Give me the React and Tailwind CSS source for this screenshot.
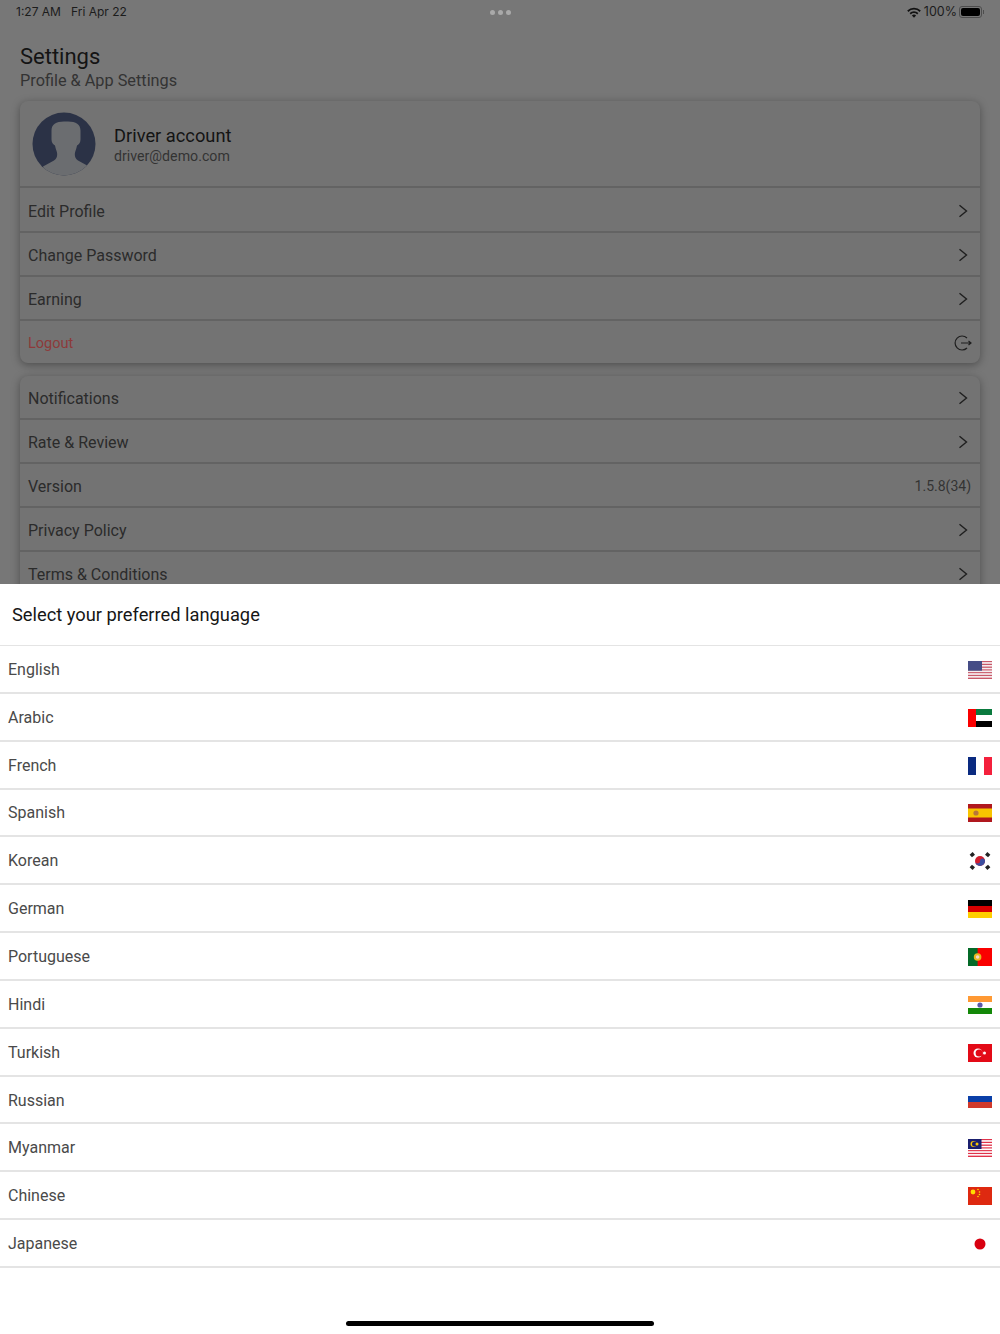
import React from "react";

const font = { fontFamily: 'Roboto, "Noto Sans", sans-serif' };

function Chevron() {
  return (
    <svg width="10" height="14" viewBox="0 0 10 14" fill="none" stroke="#1f1f1f" strokeWidth="1.4" className="mt-[2px]">
      <path d="M1.500 1.200 8.500 7 1.500 12.800" />
    </svg>
  );
}

function Row({ label, h, right, red, border = true }) {
  return (
    <div className={`flex shrink-0 items-center justify-between pl-[8px] pr-[12px] ${border ? "border-t-2 border-[#636363]" : ""} ${h}`}>
      <span className={`mt-[4px] leading-none ${red ? "text-[14.5px] text-[#8d3a3a]" : "text-[16px] text-[#2b2b2b]"}`}>{label}</span>
      {right ?? <Chevron />}
    </div>
  );
}

function StatusBar() {
  return (
    <div className="flex h-[24px] shrink-0 items-center justify-between pl-[16px] pr-[16px] text-[12px] text-[#1c1c1c]" style={{ fontFamily: 'Inter, sans-serif' }}>
      <div className="flex w-[200px] gap-[10px]">
        <span>1:27 AM</span>
        <span>Fri Apr 22</span>
      </div>
      <div className="flex gap-[3px]">
        <span className="size-[5px] rounded-full bg-[#a9a9a9]" />
        <span className="size-[5px] rounded-full bg-[#a9a9a9]" />
        <span className="size-[5px] rounded-full bg-[#a9a9a9]" />
      </div>
      <div className="flex w-[200px] items-center justify-end">
        <svg width="14" height="11" viewBox="0 0 14 11" className="mr-[3px]">
          <path d="M0.200 3.600a9.800 9.800 0 0 1 13.600 0l-1.200 1.300a8 8 0 0 0-11.200 0z" fill="#111" />
          <path d="M2.600 6.100a6.400 6.400 0 0 1 8.800 0l-1.200 1.300a4.600 4.600 0 0 0-6.400 0z" fill="#111" />
          <path d="M4.900 8.500a3 3 0 0 1 4.200 0L7 10.800z" fill="#111" />
        </svg>
        <span className="text-[12.5px]">100%</span>
        <div className="ml-[2px] flex items-center">
          <div className="flex h-[12px] w-[23px] items-center rounded-[3px] border border-[#4d4d4d] p-[1px]">
            <div className="h-full w-full rounded-[2px] bg-black" />
          </div>
          <div className="ml-[1px] h-[4px] w-[1px] bg-[#4d4d4d]" />
        </div>
      </div>
    </div>
  );
}

function Avatar() {
  return (
    <svg width="64" height="64" viewBox="0 0 64 64" className="shrink-0">
      <defs>
        <clipPath id="av"><circle cx="32" cy="32" r="31.500" /></clipPath>
      </defs>
      <circle cx="32" cy="32" r="31.500" fill="#2b3246" />
      <path clipPath="url(#av)" fill="#6b6d70" d="M32 9.500c-8 0-12.500 3-12.500 9v9c0 3 1.500 5 3.500 6 .5 3 1.500 5 2 7 .5 3 0 6-3 8l-11 6 5 15h36l5-15-11-6c-3-2-3.500-5-3-8 .5-2 1.500-4 2-7 2-1 3.500-3 3.500-6v-9c0-6-4.500-9-12.500-9z" />
    </svg>
  );
}

function Flag({ children, className = "h-[18px]", viewBox = "0 0 24 18" }) {
  return (
    <svg viewBox={viewBox} className={`w-[24px] ${className}`} preserveAspectRatio="none">
      {children}
    </svg>
  );
}

const stripes = (n, a, b) =>
  Array.from({ length: n }, (_, i) => (
    <rect key={i} x="0" y={(18 / n) * i} width="24" height={18 / n} fill={i % 2 ? b : a} />
  ));

const flags = {
  English: (
    <Flag>
      {stripes(13, "#c9596a", "#f4eef0")}
      <rect width="14" height="9.700" fill="#454d86" />
    </Flag>
  ),
  Arabic: (
    <Flag>
      <rect width="24" height="6" fill="#0a7a3e" />
      <rect y="6" width="24" height="6" fill="#fff" />
      <rect y="12" width="24" height="6" fill="#000" />
      <rect width="8" height="18" fill="#fa0000" />
    </Flag>
  ),
  French: (
    <Flag>
      <rect width="8" height="18" fill="#0a2a80" />
      <rect x="8" width="8" height="18" fill="#fff" />
      <rect x="16" width="8" height="18" fill="#f4203c" />
    </Flag>
  ),
  Spanish: (
    <Flag>
      <rect width="24" height="18" fill="#b0181e" />
      <rect y="4.500" width="24" height="9" fill="#f8c400" />
      <circle cx="8" cy="9" r="2.600" fill="#b8763a" />
    </Flag>
  ),
  Korean: (
    <Flag>
      <circle cx="12" cy="9" r="5" fill="#d01c2c" />
      <path d="M7 9a5 5 0 0 0 10 0 2.500 2.500 0 0 0-5 0 2.500 2.500 0 0 1-5 0z" fill="#3a4ea0" />
      <g stroke="#222" strokeWidth="3.600">
        <path d="M2.800 4 5.800 1.400" />
        <path d="M18.200 1.400 21.200 4" />
        <path d="M2.800 14 5.800 16.600" />
        <path d="M18.200 16.600 21.200 14" />
      </g>
    </Flag>
  ),
  German: (
    <Flag>
      <rect width="24" height="6" fill="#000" />
      <rect y="6" width="24" height="6" fill="#d80000" />
      <rect y="12" width="24" height="6" fill="#ffce00" />
    </Flag>
  ),
  Portuguese: (
    <Flag>
      <rect width="24" height="18" fill="#fa0000" />
      <rect width="9.600" height="18" fill="#046a28" />
      <circle cx="9.600" cy="9" r="3.800" fill="#e8b820" />
      <circle cx="9.600" cy="9" r="1.800" fill="#f0d8d0" />
    </Flag>
  ),
  Hindi: (
    <Flag>
      <rect width="24" height="6" fill="#ff9933" />
      <rect y="6" width="24" height="6" fill="#fff" />
      <rect y="12" width="24" height="6" fill="#138808" />
      <circle cx="12" cy="9" r="2.600" fill="#5a5aa8" />
    </Flag>
  ),
  Turkish: (
    <Flag>
      <rect width="24" height="18" fill="#e30a17" />
      <circle cx="10" cy="9" r="4.500" fill="#fff" />
      <circle cx="11.200" cy="9" r="3.600" fill="#e30a17" />
      <circle cx="16.500" cy="9" r="1.500" fill="#fff" />
    </Flag>
  ),
  Russian: (
    <Flag className="mt-[3px] h-[12px]" viewBox="0 0 24 12">
      <rect width="24" height="6" fill="#0a3fa8" />
      <rect y="6" width="24" height="6" fill="#d0392b" />
    </Flag>
  ),
  Myanmar: (
    <Flag>
      {stripes(13, "#e0334a", "#fff")}
      <rect width="13.500" height="10" fill="#1a1f6e" />
      <circle cx="5.500" cy="5" r="3" fill="#f8c800" />
      <circle cx="6.500" cy="5" r="2.500" fill="#1a1f6e" />
      <circle cx="9" cy="5" r="1.500" fill="#f8c800" />
    </Flag>
  ),
  Chinese: (
    <Flag>
      <rect width="24" height="18" fill="#de2910" />
      <circle cx="5" cy="5" r="2.400" fill="#ffde00" />
      <circle cx="10" cy="2.500" r="0.800" fill="#ffde00" />
      <circle cx="11.500" cy="5" r="0.800" fill="#ffde00" />
      <circle cx="11.500" cy="7.500" r="0.800" fill="#ffde00" />
      <circle cx="10" cy="9.500" r="0.800" fill="#ffde00" />
    </Flag>
  ),
  Japanese: (
    <Flag>
      <circle cx="12" cy="9" r="5.500" fill="#d80010" />
    </Flag>
  ),
};

const languages = Object.keys(flags);

export default function App() {
  return (
    <div className="flex h-[1334px] w-[1000px] flex-col overflow-hidden bg-white" style={font}>
      <div className="flex h-[584px] shrink-0 flex-col overflow-hidden bg-[#777777]">
        <StatusBar />
        <div className="flex shrink-0 flex-col px-[20px] pt-[19px]">
          <h1 className="text-[22px] leading-[28px] text-[#141414]">Settings</h1>
          <p className="text-[16.3px] leading-[19px] text-[#333333]">Profile &amp; App Settings</p>

          <div className="mt-[11px] flex h-[262px] flex-col rounded-[8px] bg-[#737373] shadow-[0_2px_8px_rgba(0,0,0,0.35)]">
            <div className="flex h-[85px] shrink-0 items-center gap-[18px] pl-[12px]">
              <Avatar />
              <div className="flex flex-col pt-[1px]">
                <span className="text-[18.3px] leading-[24px] text-[#141414]">Driver account</span>
                <span className="text-[14.2px] leading-[16px] text-[#333333]">driver@demo.com</span>
              </div>
            </div>
            <Row label="Edit Profile" h="h-[45px]" />
            <Row label="Change Password" h="h-[44px]" />
            <Row label="Earning" h="h-[44px]" />
            <Row
              label="Logout"
              h="h-[44px]"
              red
              right={
                <svg width="18" height="16" viewBox="0 0 18 16" fill="none" stroke="#1f1f1f" strokeWidth="1.200" className="-mr-[4px] mt-[2px]">
                  <path d="M13 3a7 7 0 1 0 0 10" />
                  <path d="M7 8h10M14.500 6l2.500 2-2.500 2" />
                </svg>
              }
            />
          </div>

          <div className="mt-[13px] flex h-[240px] flex-col rounded-t-[8px] bg-[#737373] shadow-[0_2px_8px_rgba(0,0,0,0.35)]">
            <Row label="Notifications" h="h-[42px]" border={false} />
            <Row label="Rate & Review" h="h-[44px]" />
            <Row label="Version" h="h-[44px]" right={<span className="-mr-[3px] mt-[2px] text-[14px] text-[#333333]">1.5.8(34)</span>} />
            <Row label="Privacy Policy" h="h-[44px]" />
            <Row label="Terms & Conditions" h="h-[44px]" />
          </div>
        </div>
      </div>

      <div className="flex flex-1 flex-col bg-white">
        <div className="flex h-[62px] shrink-0 items-center border-b border-[#e4e4e4] pl-[12px] pt-[1px]">
          <h2 className="text-[18.3px] leading-none text-[#161616]">Select your preferred language</h2>
        </div>
        {languages.map((name) => (
          <div key={name} className="flex h-[47.85px] shrink-0 items-center justify-between border-b-2 border-[#e4e4e4] px-[8px] pt-[2px]">
            <span className="text-[16px] leading-none text-[#4a4a4a]">{name}</span>
            {flags[name]}
          </div>
        ))}
        <div className="flex flex-1 items-end justify-center pb-[8px]">
          <div className="h-[5px] w-[308px] rounded-full bg-black" />
        </div>
      </div>
    </div>
  );
}
